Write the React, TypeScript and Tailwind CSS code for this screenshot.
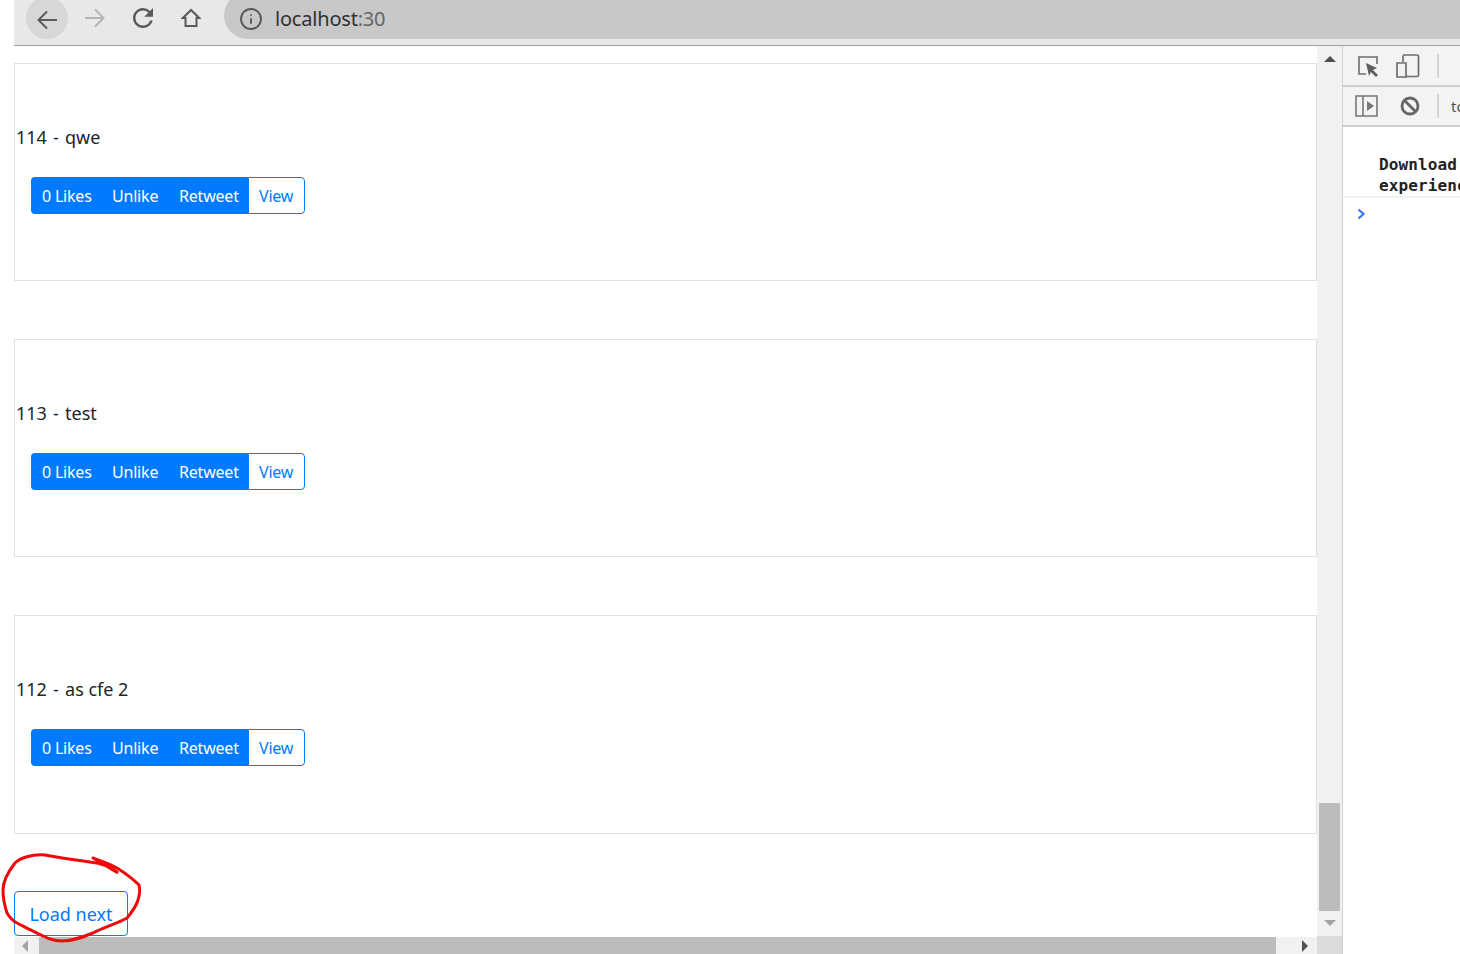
import { Info } from "lucide-react";

const tweets = [
  { id: 114, text: "qwe", height: "h-[218px]" },
  { id: 113, text: "test", height: "h-[218px]" },
  { id: 112, text: "as cfe 2", height: "h-[219px]" },
];

function TweetCard({ id, text, height }: { id: number; text: string; height: string }) {
  return (
    <div className={`${height} border border-[#dee2e6] flex flex-col`}>
      <p className="mt-[61px] pl-px h-[24px] text-[18px] leading-[24px] text-[#212529]">
        <span className="[word-spacing:1.5px]">{id} - </span>
        {text}
      </p>
      {/* Button group */}
      <div className="mt-[28px] ml-4 flex h-[37px] w-[274px] text-[16px] tracking-[-0.2px]">
        <div className="flex flex-1 rounded-l-[4px] bg-[#007bff] leading-[39px] text-white">
          <span className="ml-[11px] w-[70px]">0 Likes</span>
          <span className="w-[67px]">Unlike</span>
          <span>Retweet</span>
        </div>
        <div className="w-[57px] rounded-r-[4px] border border-[#007bff] pl-[10px] leading-[37px] text-[#007bff]">View</div>
      </div>
    </div>
  );
}

function BrowserBar() {
  return (
    <div className="ml-[14px] h-[46px] shrink-0 border-b border-[#a0a0a0] bg-[#e8e8e8] flex overflow-hidden">
      <div className="ml-3 -mt-[3px] flex h-[42px] w-[42px] shrink-0 items-center justify-center rounded-full bg-[#d7d7d7]">
        <svg className="mt-[3px] h-5 w-5" viewBox="0 0 20 20" fill="none" stroke="#5a5a5a" strokeWidth="2">
          <path d="M20 10H2M10 1.5 1.5 10l8.5 8.5" />
        </svg>
      </div>
      <svg className="ml-[17px] mt-2 h-5 w-5 shrink-0" viewBox="0 0 20 20" fill="none" stroke="#b4b4b4" strokeWidth="2">
        <path d="M0 10h18M10 1.5l8.5 8.5-8.5 8.5" />
      </svg>
      <svg className="ml-[28px] mt-2 h-5 w-5 shrink-0" viewBox="4 4 16 16" fill="#5a5a5a">
        <path d="M17.65 6.35A7.958 7.958 0 0 0 12 4c-4.42 0-7.99 3.58-7.99 8s3.57 8 7.99 8c3.73 0 6.84-2.55 7.73-6h-2.08A5.99 5.99 0 0 1 12 18c-3.31 0-6-2.69-6-6s2.69-6 6-6c1.66 0 3.14.69 4.22 1.78L13 11h7V4l-2.35 2.35z" />
      </svg>
      <svg className="ml-[28px] mt-2 h-5 w-5 shrink-0" viewBox="0 0 20 20" fill="none" stroke="#5a5a5a" strokeWidth="2">
        <path d="M10 2 1.8 10h2.7v8h11v-8h2.7Z" />
      </svg>
      <div className="ml-[23px] -mt-2 flex h-[47px] flex-1 items-center rounded-l-[24px] bg-[#c8c8c8] pt-[6px]">
        <Info className="ml-[15px] h-6 w-6 text-[#555555]" strokeWidth={1.8} />
        <span className="ml-[12px] text-[20px] tracking-[-0.2px] text-[#303030]">
          localhost<span className="text-[#666666]">:30</span>
        </span>
      </div>
    </div>
  );
}

function VerticalScrollbar() {
  return (
    <div className="flex w-[26px] shrink-0 flex-col items-center border-r border-[#d0d0d0] bg-[#f1f1f1]">
      <svg className="mt-[10px] h-[6px] w-[12px]" viewBox="0 0 12 6">
        <path d="M6 0 12 6H0Z" fill="#505050" />
      </svg>
      <div className="mt-[741px] h-[108px] w-[21px] bg-[#bcbcbc]" />
      <svg className="mt-[9px] h-[6px] w-[12px]" viewBox="0 0 12 6">
        <path d="M0 0H12L6 6Z" fill="#a3a3a3" />
      </svg>
      <div className="mt-auto h-[18px] w-full bg-[#dcdcdc]" />
    </div>
  );
}

function DevTools() {
  return (
    <div className="flex-1 overflow-hidden bg-white">
      <div className="flex h-[41px] items-center border-b-2 border-[#cfcfcf] bg-[#f3f3f3]">
        <svg className="ml-[14px] h-[24px] w-[24px] shrink-0" viewBox="0 0 24 24" fill="none">
          <path d="M9 20H2V3h18v7" stroke="#6e6e6e" strokeWidth="1.6" />
          <path d="M9 9l11 5-4 2 5 5-2 2-5-5-2 4Z" fill="#5f5f5f" />
        </svg>
        <svg className="ml-[15px] h-[24px] w-[24px] shrink-0" viewBox="0 0 24 24" fill="none" stroke="#6e6e6e" strokeWidth="1.7">
          <path d="M7 8V2.5a1.5 1.5 0 0 1 1.5-1.5H21a1.5 1.5 0 0 1 1.5 1.5V21a1.5 1.5 0 0 1-1.5 1.5H10" />
          <path d="M1 9h9v14H1Z" />
        </svg>
        <div className="ml-[17px] h-[24px] w-[2px] shrink-0 bg-[#d4d4d4]" />
      </div>
      <div className="flex h-[40px] items-center border-b-2 border-[#cfcfcf] bg-[#f3f3f3]">
        <svg className="ml-[12px] h-[22px] w-[23px] shrink-0" viewBox="0 0 23 22" fill="none">
          <path d="M1 1h21v20H1ZM8 1v20" stroke="#777777" strokeWidth="1.6" />
          <path d="M12 6l7 5-7 5Z" fill="#777777" />
        </svg>
        <svg className="ml-[22px] h-[20px] w-[20px] shrink-0" viewBox="0 0 20 20" fill="none" stroke="#666666" strokeWidth="2.8">
          <circle cx="10" cy="10" r="8" />
          <path d="M4.5 4.5l11 11" />
        </svg>
        <div className="ml-[17px] h-[24px] w-[2px] shrink-0 bg-[#d4d4d4]" />
        <span className="ml-[12px] text-[15px] text-[#555555]">top</span>
      </div>
      <div className="h-[71px] border-b-2 border-[#f0f0f0] pl-9 pt-[27px] font-['DejaVu_Sans_Mono',monospace] text-[16px] font-semibold leading-[21px] tracking-[0.1px] text-[#222222]">
        <p className="whitespace-nowrap">Download the React DevTools</p>
        <p className="whitespace-nowrap">experience</p>
      </div>
      <svg className="ml-[14px] mt-[10px] h-[12px] w-[9px]" viewBox="0 0 9 12" fill="none">
        <path d="M1.5 1.5 6.5 6l-5 4.5" stroke="#3478f6" strokeWidth="2.2" />
      </svg>
    </div>
  );
}

function HorizontalScrollbar() {
  return (
    <div className="ml-[14px] flex h-[17px] shrink-0 items-center bg-[#f1f1f1]">
      <svg className="ml-[8px] h-3 w-[6px]" viewBox="0 0 6 12">
        <path d="M6 0V12L0 6Z" fill="#a3a3a3" />
      </svg>
      <div className="ml-[11px] h-full flex-1 bg-[#bcbcbc]" />
      <svg className="ml-[26px] mr-[9px] h-3 w-[6px]" viewBox="0 0 6 12">
        <path d="M0 0V12L6 6Z" fill="#505050" />
      </svg>
    </div>
  );
}

export default function App() {
  return (
    <div className="flex h-[954px] w-[1460px] flex-col overflow-hidden bg-white font-['Noto_Sans',sans-serif]">
      <BrowserBar />
      <div className="flex min-h-0 flex-1">
        <div className="relative flex w-[1317px] shrink-0 flex-col">
          <div className="min-h-0 flex-1 pl-[14px] pt-[17px]">
            <div className="flex w-[1303px] flex-col gap-[58px]">
              {tweets.map((t) => (
                <TweetCard key={t.id} id={t.id} text={t.text} height={t.height} />
              ))}
            </div>
            <button className="mt-[57px] h-[45px] w-[114px] rounded-[4px] border border-[#007bff] pt-[1px] text-[18px] text-[#007bff]">
              Load next
            </button>
          </div>
          <HorizontalScrollbar />
          {/* Red annotation scribble */}
          <svg className="absolute left-0 top-[806px] h-[102px] w-[150px]" viewBox="0 0 150 102" fill="none">
            <path
              d="M93 6L118 21C110 14 100 11 90 10C75 8 60 6 45 3C32 2 20 6 15 11C8 20 3 28 3 38C3 48 5 55 7 61C10 66 13 69 17 71C25 75 30 78 37 81C45 85 52 89 62 89C73 89 83 85 93 81C105 75 116 72 127 66C132 60 136 55 138 48C140 42 140 37 139 33C133 27 125 21 117 16C110 12 103 10 93 6"
              stroke="#ee0a0a"
              strokeWidth="3"
              strokeLinecap="round"
            />
          </svg>
        </div>
        <VerticalScrollbar />
        <DevTools />
      </div>
    </div>
  );
}
